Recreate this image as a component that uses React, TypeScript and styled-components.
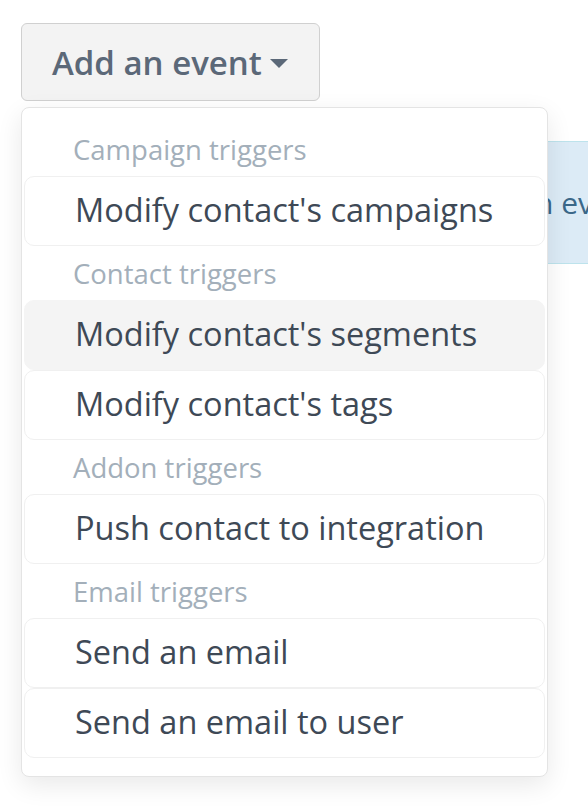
import { createGlobalStyle, styled } from "styled-components";

const GlobalStyle = createGlobalStyle`
  html, body {
    margin: 0;
    padding: 0;
    background: #ffffff;
    overflow: hidden;
  }
  body {
    font-family: "Open Sans", "Noto Sans", sans-serif;
  }
`;

const Page = styled.div`
  position: relative;
  padding: 23px 0 0 21px;
  height: 812px;
  box-sizing: border-box;
`;

const Toolbar = styled.div`
  position: relative;
  display: inline-block;
`;

const DropdownButton = styled.button`
  display: flex;
  align-items: center;
  gap: 8px;
  height: 78px;
  padding: 0 31px 0 30px;
  border: 1px solid #d0d0d0;
  border-radius: 6px;
  background: #f3f3f3;
  color: #5b6878;
  font-family: "Open Sans", sans-serif;
  font-size: 33px;
  font-weight: 600;
  cursor: pointer;
`;

const Caret = styled.span`
  display: inline-block;
  width: 0;
  height: 0;
  margin-top: 2px;
  border-left: 9.5px solid transparent;
  border-right: 9.5px solid transparent;
  border-top: 9px solid #5b6878;
`;

const Menu = styled.div`
  position: absolute;
  top: 84px;
  left: 0;
  z-index: 10;
  width: 527px;
  box-sizing: border-box;
  padding: 14px 2px 18px;
  background: #ffffff;
  border: 1px solid #e4e4e4;
  border-radius: 8px;
  box-shadow: 0 8px 26px rgba(0, 0, 0, 0.09);
  display: flex;
  flex-direction: column;
`;

const Group = styled.div`
  display: contents;
`;

const GroupHeader = styled.div`
  height: 54px;
  display: flex;
  align-items: center;
  padding-left: 49px;
  color: #a3afba;
  font-size: 27.5px;
`;

const MenuItem = styled.div<{ $active?: boolean }>`
  height: 70px;
  box-sizing: border-box;
  display: flex;
  align-items: center;
  padding: 0 0 3px 50px;
  border: 1px solid ${(p) => (p.$active ? "#f4f4f4" : "#f0f0f0")};
  border-radius: 10px;
  background: ${(p) => (p.$active ? "#f4f4f4" : "#ffffff")};
  color: #3e4956;
  font-size: 32.5px;
  cursor: pointer;
`;

const Notice = styled.div`
  margin-top: 40px;
  width: 900px;
  height: 123px;
  box-sizing: border-box;
  display: flex;
  align-items: center;
  padding-left: 17px;
  background: #dcebf6;
  border: 1px solid #bde3ec;
  border-radius: 4px;
  color: #3b6889;
  font-size: 30px;
  white-space: nowrap;
`;

const groups = [
  { title: "Campaign triggers", items: ["Modify contact's campaigns"] },
  {
    title: "Contact triggers",
    items: ["Modify contact's segments", "Modify contact's tags"],
  },
  { title: "Addon triggers", items: ["Push contact to integration"] },
  { title: "Email triggers", items: ["Send an email", "Send an email to user"] },
];

export default function App() {
  return (
    <Page>
      <GlobalStyle />
      <Toolbar>
        <DropdownButton>
          Add an event
          <Caret />
        </DropdownButton>
        <Menu>
          {groups.map((group) => (
            <Group key={group.title}>
              <GroupHeader>{group.title}</GroupHeader>
              {group.items.map((item) => (
                <MenuItem key={item} $active={item === "Modify contact's segments"}>
                  {item}
                </MenuItem>
              ))}
            </Group>
          ))}
        </Menu>
      </Toolbar>
      <Notice>Start building your campaign: add an event to begin.</Notice>
    </Page>
  );
}
